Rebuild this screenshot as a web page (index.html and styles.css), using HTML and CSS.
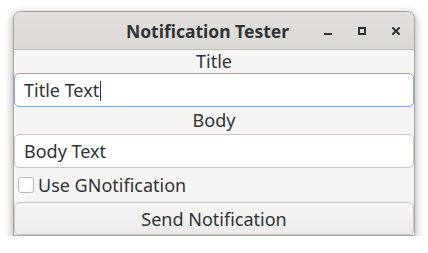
FILE: index.html
```html
<!DOCTYPE html>
<html lang="en">
	<head>
		<meta charset="UTF-8" />
		<title>Notification Tester</title>
		<link rel="stylesheet" href="styles.css">
	</head>
	<body>
		<div class="window">
			<div class="titlebar">
				<div class="title">Notification Tester</div>
				<div class="controls">
					<button class="wbtn">
						<svg width="8" height="8" viewBox="0 0 8 8"><rect x="0" y="6" width="8" height="2" fill="#2e3436"/></svg>
					</button>
					<button class="wbtn">
						<svg width="8" height="8" viewBox="0 0 8 8"><rect x="1" y="1" width="6" height="6" fill="none" stroke="#2e3436" stroke-width="2"/></svg>
					</button>
					<button class="wbtn">
						<svg width="8" height="8" viewBox="0 0 8 8"><path d="M1 1 L7 7 M7 1 L1 7" stroke="#2e3436" stroke-width="2" stroke-linecap="square"/></svg>
					</button>
				</div>
			</div>
			<div class="content">
				<div class="label label-top">Title</div>
				<div class="entry focused">Title Text<span class="cursor"></span></div>
				<div class="label">Body</div>
				<div class="entry">Body Text</div>
				<label class="check-row">
					<span class="check"></span>
					Use GNotification
				</label>
				<button class="send-btn">Send Notification</button>
			</div>
		</div>
	</body>
</html>
```
FILE: styles.css
```css
body {
	margin: 0;
	background-color: #ffffff;
	font-family: "Noto Sans", sans-serif;
	color: #2e3436;
}

.window {
	margin: 11px 0 0 13px;
	width: 400px;
	border: 1px solid #a8a49f;
	border-radius: 8px 8px 0 0;
	background-color: #f6f5f4;
	box-shadow: 0 3px 8px 1px rgba(0, 0, 0, 0.3);
}

.titlebar {
	height: 37px;
	display: flex;
	align-items: center;
	background: linear-gradient(#e3e0dd, #dcd8d4);
	border-bottom: 1px solid #c0b9b2;
	border-radius: 7px 7px 0 0;
	padding-left: 86px;
	padding-right: 5px;
}

.title {
	flex: 1;
	text-align: center;
	font-weight: bold;
	font-size: 17.5px;
}

.controls {
	display: flex;
	gap: 8px;
}

.wbtn {
	width: 26px;
	height: 26px;
	padding: 0;
	border: none;
	background: none;
	display: flex;
	align-items: center;
	justify-content: center;
}

.content {
	display: flex;
	flex-direction: column;
	font-size: 18px;
}

.label {
	height: 27px;
	line-height: 27px;
	text-align: center;
}

.label-top {
	height: 23px;
	line-height: 23px;
}

.entry {
	height: 32px;
	line-height: 32px;
	background-color: #ffffff;
	border: 1px solid #cdc7c2;
	border-radius: 5px;
	padding-left: 9px;
}

.entry.focused {
	border-color: #86a9d9;
}

.cursor {
	display: inline-block;
	width: 1px;
	height: 20px;
	margin-left: 1px;
	background-color: #2e3436;
	vertical-align: -4px;
}

.check-row {
	height: 34px;
	display: flex;
	align-items: center;
	gap: 4px;
	padding-left: 4px;
}

.check {
	width: 14px;
	height: 14px;
	border: 1px solid #c0b9b2;
	border-radius: 3px;
	background-color: #ffffff;
}

.send-btn {
	height: 33px;
	font-family: "Noto Sans", sans-serif;
	font-size: 18px;
	color: #2e3436;
	background: linear-gradient(#f6f5f4, #edebe9);
	border: 1px solid #cdc7c2;
	border-radius: 5px;
	padding: 0;
}
```
